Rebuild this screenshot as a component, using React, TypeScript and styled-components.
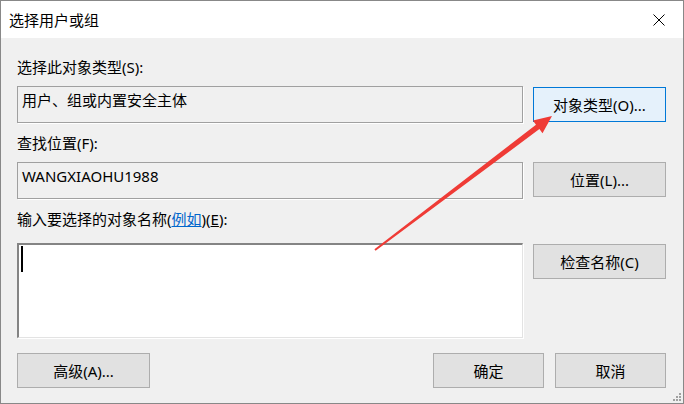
import styled, { createGlobalStyle } from 'styled-components';

const GlobalStyle = createGlobalStyle`
  html, body {
    margin: 0;
    padding: 0;
    background: #ffffff;
  }
  body {
    font-family: "Noto Sans", "Noto Sans CJK SC", sans-serif;
  }
`;

const Window = styled.div`
  position: relative;
  width: 684px;
  height: 404px;
  box-sizing: border-box;
  border: 1px solid #888888;
  background: #f0f0f0;
  display: flex;
  flex-direction: column;
  overflow: hidden;
`;

const TitleBar = styled.div`
  height: 37px;
  background: #ffffff;
  display: flex;
  align-items: center;
  justify-content: space-between;
  padding: 0 0 0 8px;
  font-size: 15px;
  color: #000;
`;

const CloseButton = styled.div`
  width: 46px;
  height: 37px;
  display: flex;
  align-items: center;
  justify-content: center;
  margin-right: 1px;
`;

const Body = styled.div`
  display: grid;
  grid-template-columns: 506px 133px;
  column-gap: 10px;
  padding: 0 17px 0 16px;
  align-items: start;
`;

const Label = styled.div<{ top: number }>`
  grid-column: 1 / -1;
  height: 20px;
  line-height: 20px;
  margin-top: ${p => p.top}px;
  font-size: 15px;
  color: #000;
`;

const Link = styled.span`
  color: #0066cc;
  text-decoration: underline;
`;

const Key = styled.span`
  text-decoration: underline;
`;

const ReadBox = styled.div<{ top: number }>`
  margin-top: ${p => p.top}px;
  height: 37px;
  box-sizing: border-box;
  border: 1px solid #a0a0a0;
  box-shadow: 1px 1px 0 #ffffff;
  padding: 3px 4px;
  font-size: 15px;
  line-height: 20px;
  color: #000;
`;

const Button = styled.div<{ top?: number; focused?: boolean; w?: number }>`
  margin-top: ${p => p.top ?? 0}px;
  width: ${p => (p.w ? `${p.w}px` : 'auto')};
  height: 35px;
  box-sizing: border-box;
  border: 1px solid ${p => (p.focused ? '#0078d7' : '#adadad')};
  background: ${p => (p.focused ? '#e5f1fb' : '#e1e1e1')};
  display: flex;
  align-items: center;
  justify-content: center;
  font-size: 15px;
  color: #000;
`;

const NameInput = styled.div`
  margin-top: 14px;
  height: 95px;
  box-sizing: border-box;
  background: #ffffff;
  border-top: 2px solid #848484;
  border-left: 2px solid #848484;
  border-right: 1px solid #e3e3e3;
  border-bottom: 1px solid #e3e3e3;
  box-shadow: 1px 1px 0 #ffffff;
  padding: 1px 2px;
`;

const Caret = styled.div`
  width: 2px;
  height: 26px;
  background: #000;
`;

const Footer = styled.div`
  grid-column: 1 / -1;
  margin-top: 15px;
  display: flex;
  align-items: center;
  gap: 11px;
`;

const Spacer = styled.div`
  flex: 1;
`;

const Grip = styled.div`
  position: absolute;
  right: 2px;
  bottom: 2px;
  display: grid;
  grid-template-columns: repeat(3, 2px);
  grid-template-rows: repeat(3, 2px);
  gap: 1px;
`;

const GripDot = styled.div<{ on: boolean }>`
  background: ${p => (p.on ? '#a0a0a0' : 'transparent')};
`;

const Overlay = styled.svg`
  position: absolute;
  left: -1px;
  top: -1px;
  pointer-events: none;
`;

const gripCells = [0, 0, 1, 0, 1, 1, 1, 1, 1];

export default function App() {
  return (
    <>
      <GlobalStyle />
      <Window>
        <TitleBar>
          <span>选择用户或组</span>
          <CloseButton>
            <svg width="12" height="12" viewBox="0 0 12 12">
              <path d="M0.5 0.5 L11.5 11.5 M11.5 0.5 L0.5 11.5" stroke="#000" strokeWidth="1" />
            </svg>
          </CloseButton>
        </TitleBar>
        <Body>
          <Label top={19}>选择此对象类型(S):</Label>
          <ReadBox top={9}>用户、组或内置安全主体</ReadBox>
          <Button top={10} focused>对象类型(O)...</Button>

          <Label top={10}>查找位置(F):</Label>
          <ReadBox top={9}>WANGXIAOHU1988</ReadBox>
          <Button top={9}>位置(L)...</Button>

          <Label top={10}>
            输入要选择的对象名称(<Link>例如</Link>)(<Key>E</Key>):
          </Label>
          <NameInput>
            <Caret />
          </NameInput>
          <Button top={15}>检查名称(C)</Button>

          <Footer>
            <Button w={133}>高级(A)...</Button>
            <Spacer />
            <Button w={111}>确定</Button>
            <Button w={111}>取消</Button>
          </Footer>
        </Body>
        <Grip>
          {gripCells.map((on, i) => (
            <GripDot key={i} on={on === 1} />
          ))}
        </Grip>
        <Overlay width="684" height="404" viewBox="0 0 684 404">
          <polygon
            points="374.4,249.2 536,124.7 532.9,120.5 552,116 542.5,133.3 539.4,129.1 375.6,250.8"
            fill="#ef3b36"
          />
        </Overlay>
      </Window>
    </>
  );
}
